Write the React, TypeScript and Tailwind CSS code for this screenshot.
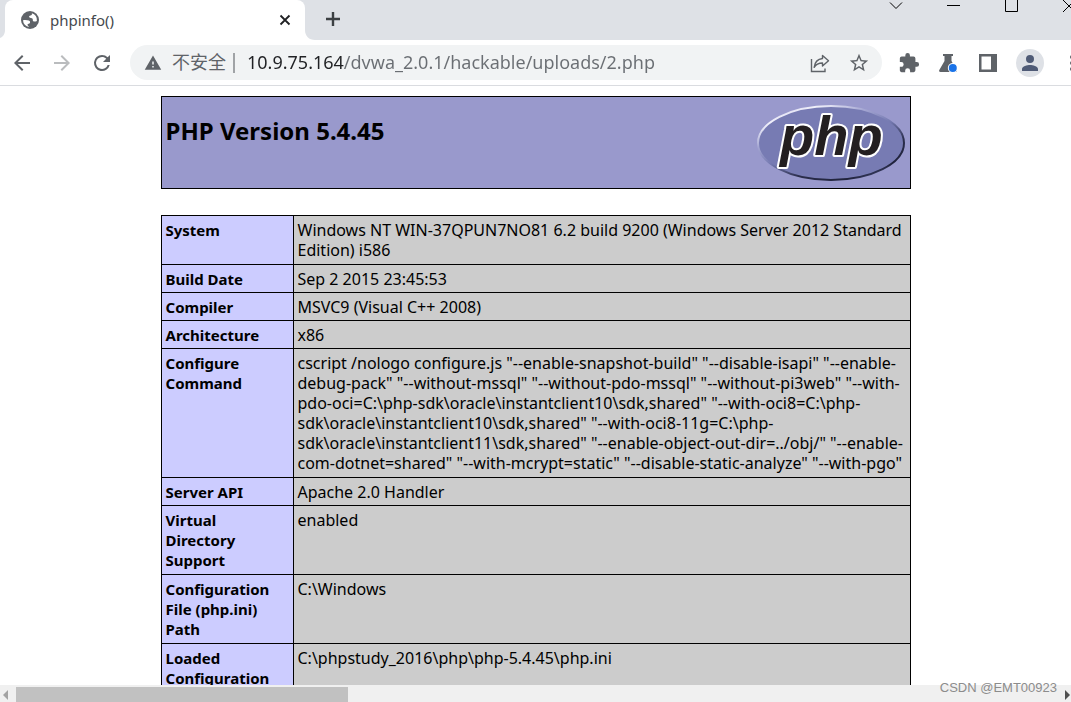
import React from "react";

type Row = { label: string[]; value: string[] };

const rows: Row[] = [
  {
    label: ["System"],
    value: [
      "Windows NT WIN-37QPUN7NO81 6.2 build 9200 (Windows Server 2012 Standard",
      "Edition) i586",
    ],
  },
  { label: ["Build Date"], value: ["Sep 2 2015 23:45:53"] },
  { label: ["Compiler"], value: ["MSVC9 (Visual C++ 2008)"] },
  { label: ["Architecture"], value: ["x86"] },
  {
    label: ["Configure", "Command"],
    value: [
      'cscript /nologo configure.js "--enable-snapshot-build" "--disable-isapi" "--enable-',
      'debug-pack" "--without-mssql" "--without-pdo-mssql" "--without-pi3web" "--with-',
      'pdo-oci=C:\\php-sdk\\oracle\\instantclient10\\sdk,shared" "--with-oci8=C:\\php-',
      'sdk\\oracle\\instantclient10\\sdk,shared" "--with-oci8-11g=C:\\php-',
      'sdk\\oracle\\instantclient11\\sdk,shared" "--enable-object-out-dir=../obj/" "--enable-',
      'com-dotnet=shared" "--with-mcrypt=static" "--disable-static-analyze" "--with-pgo"',
    ],
  },
  { label: ["Server API"], value: ["Apache 2.0 Handler"] },
  { label: ["Virtual", "Directory", "Support"], value: ["enabled"] },
  { label: ["Configuration", "File (php.ini)", "Path"], value: ["C:\\Windows"] },
  {
    label: ["Loaded", "Configuration"],
    value: ["C:\\phpstudy_2016\\php\\php-5.4.45\\php.ini"],
  },
];

function Icon({ d, className }: { d: string; className: string }) {
  return (
    <svg viewBox="0 0 24 24" className={className} fill="currentColor" aria-hidden="true">
      <path d={d} />
    </svg>
  );
}

function TabStrip() {
  return (
    <header className="flex h-10 shrink-0 bg-[#dee1e6]">
      <div className="flex w-[5px] shrink-0 items-end bg-[#dee1e6]">
        <svg viewBox="0 0 5 10" className="h-2.5 w-[5px]" aria-hidden="true">
          <path d="M5 0v10H0V8C3 7 5 4 5 0z" fill="#fff" />
        </svg>
      </div>
      <div className="flex w-[300px] shrink-0 items-center rounded-t-lg bg-white pr-2.5 pl-4">
        <svg viewBox="0 0 18 18" className="h-[18px] w-[18px]" aria-hidden="true">
          <circle cx="9" cy="9" r="9" fill="#5f6368" />
          <path
            d="M2 9.200c2.200-.4 4.500-.2 5.800.4 1.300.6 1.500 1.600 1.100 2.300-.5.800-1.900.6-2.300 1.400-.3.700.3 1.500 1.500 2.600A7 7 0 0 1 2 9.200z"
            fill="#fff"
          />
          <path
            d="M10.800 2.200c.5 1.300-.1 2-1.300 2.200-1.300.3-1.700 1-1.200 1.800.6.900 2.700.5 3.300 1.500.5.900-.2 1.800.7 2.500.9.700 2.200.3 3.600-.3A7 7 0 0 0 10.800 2.200z"
            fill="#fff"
          />
        </svg>
        <span className="ml-[11px] flex-1 text-[15px] leading-5 text-[#45494d]">phpinfo()</span>
        <button aria-label="Close tab" className="flex h-5 w-5 items-center justify-center text-[#202124]">
          <svg viewBox="0 0 12 12" className="h-3 w-3" aria-hidden="true">
            <path d="M1.500 1.500l9 9M10.500 1.500l-9 9" stroke="currentColor" strokeWidth="1.800" />
          </svg>
        </button>
      </div>
      <div className="flex w-2.5 shrink-0 items-end">
        <svg viewBox="0 0 10 10" className="h-2.5 w-2.5" aria-hidden="true">
          <path d="M0 0v10h10C4 10 0 6 0 0z" fill="#fff" />
        </svg>
      </div>
      <button aria-label="New tab" className="flex w-9 items-center justify-center pb-[3px] text-[#3c4043]">
        <svg viewBox="0 0 16 16" className="h-4 w-4" aria-hidden="true">
          <path d="M8 1v14M1 8h14" stroke="currentColor" strokeWidth="2.400" />
        </svg>
      </button>
      <div className="flex flex-1 justify-end overflow-hidden text-black">
        <div className="-mr-1.5 flex h-3 items-center gap-11">
          <button aria-label="Search tabs">
            <svg viewBox="0 0 14 12" className="h-3 w-3.5" fill="none" aria-hidden="true">
              <path d="M1 2.500l6 6 6-6" stroke="currentColor" />
            </svg>
          </button>
          <button aria-label="Minimize">
            <svg viewBox="0 0 14 12" className="h-3 w-3.5" fill="none" aria-hidden="true">
              <path d="M0 5.500h13" stroke="currentColor" />
            </svg>
          </button>
          <button aria-label="Maximize">
            <svg viewBox="0 0 14 12" className="h-3 w-3.5" fill="none" aria-hidden="true">
              <path d="M.5-1v12.500h12V-1" stroke="currentColor" />
            </svg>
          </button>
          <button aria-label="Close window">
            <svg viewBox="0 0 14 12" className="h-3 w-3.5" fill="none" aria-hidden="true">
              <path d="M0 0l12 12M12 0L0 12" stroke="currentColor" />
            </svg>
          </button>
        </div>
      </div>
    </header>
  );
}

function Toolbar() {
  return (
    <nav className="flex h-[46px] shrink-0 items-center overflow-hidden border-b border-[#dadce0] bg-white pl-2.5 text-[#5f6368]">
      <button aria-label="Back" className="mr-4 shrink-0">
        <Icon className="h-6 w-6" d="M20 11H7.830l5.590-5.590L12 4l-8 8 8 8 1.410-1.410L7.830 13H20v-2z" />
      </button>
      <button aria-label="Forward" className="mr-4 shrink-0 text-[#babcbe]">
        <Icon className="h-6 w-6" d="M4 13h12.170l-5.590 5.590L12 20l8-8-8-8-1.410 1.410L16.170 11H4v2z" />
      </button>
      <button aria-label="Reload" className="mr-4 shrink-0">
        <Icon
          className="h-6 w-6"
          d="M17.650 6.350A7.960 7.960 0 0 0 12 4a8 8 0 1 0 7.730 10h-2.080A6 6 0 1 1 12 6c1.660 0 3.140.69 4.220 1.780L13 11h7V4l-2.350 2.350z"
        />
      </button>
      <div className="flex h-[35px] flex-1 items-center rounded-full bg-[#f1f3f4] pr-3 pl-3.5">
        <Icon className="h-[18px] w-[18px] shrink-0" d="M1 21h22L12 2 1 21zm12-3h-2v-2h2v2zm0-4h-2v-4h2v4z" />
        <label htmlFor="address" className="ml-2.5 shrink-0 pb-0.5 text-[18px] leading-6">
          不安全
        </label>
        <span className="ml-[7px] h-5 w-0.5 shrink-0 bg-[#a0a3a6]" />
        <input
          id="address"
          type="text"
          defaultValue="10.9.75.164/dvwa_2.0.1/hackable/uploads/2.php"
          className="ml-3 min-w-0 flex-1 bg-linear-to-r from-[#202124] from-[97px] to-[#6a6e73] to-[97px] bg-clip-text pb-0.5 text-[18px] leading-6 text-transparent outline-none"
        />
        <button aria-label="Share" className="mr-4 shrink-0">
          <svg viewBox="0 0 24 24" className="h-6 w-6" fill="none" stroke="currentColor" strokeWidth="1.400" aria-hidden="true">
            <path d="M3.500 8v12.500h13.500V17.500" />
            <path d="M14.500 4.500l6 5.300-6 5.300v-3.100c-4 0-6.500 1.200-8.300 4.300.5-4.500 3.300-8.300 8.300-8.800v-3z" strokeLinejoin="round" />
          </svg>
        </button>
        <button aria-label="Bookmark" className="shrink-0">
          <Icon
            className="h-[22px] w-[22px]"
            d="M22 9.240l-7.190-.62L12 2 9.190 8.630 2 9.240l5.460 4.730L5.820 21 12 17.270 18.180 21l-1.630-7.030L22 9.240zM12 15.400l-3.760 2.270 1-4.280-3.320-2.880 4.380-.38L12 6.100l1.710 4.040 4.380.38-3.320 2.880 1 4.280L12 15.400z"
          />
        </button>
      </div>
      <div className="-mr-[13px] ml-4 flex shrink-0 items-center gap-4">
        <button aria-label="Extensions">
          <Icon
            className="h-[22px] w-[22px]"
            d="M20.500 11H19V7a2 2 0 0 0-2-2h-4V3.500a2.500 2.500 0 0 0-5 0V5H4a2 2 0 0 0-2 2v3.800h1.500a2.700 2.700 0 0 1 0 5.400H2V20c0 1.100.9 2 2 2h3.800v-1.500a2.700 2.700 0 0 1 5.400 0V22H17a2 2 0 0 0 2-2v-4h1.500a2.500 2.500 0 0 0 0-5z"
          />
        </button>
        <button aria-label="Experiments">
          <svg viewBox="0 0 24 24" className="h-6 w-6" aria-hidden="true">
            <path d="M7 3h10v2h-1.500v5l5 9c.7 1.300 0 2-1 2h-15c-1.200 0-1.800-.9-1.200-2l5.200-9V5H7z" fill="currentColor" />
            <circle cx="16.800" cy="17" r="5" fill="#fff" />
            <circle cx="16.800" cy="17" r="4" fill="#1a73e8" />
          </svg>
        </button>
        <button aria-label="Side panel">
          <svg viewBox="0 0 18 18" className="mx-[3px] h-[18px] w-[18px]" aria-hidden="true">
            <path d="M0 0h18v18H0zM2.500 2.500v13H12v-13z" fill="currentColor" fillRule="evenodd" />
          </svg>
        </button>
        <button aria-label="Profile" className="flex h-7 w-7 items-center justify-center rounded-full bg-[#dee1e6] text-[#4f5b76]">
          <Icon
            className="h-6 w-6"
            d="M12 12a4 4 0 1 0 0-8 4 4 0 0 0 0 8zm0 2c-2.670 0-8 1.340-8 4v2h16v-2c0-2.660-5.330-4-8-4z"
          />
        </button>
        <button aria-label="Menu">
          <Icon
            className="h-6 w-6"
            d="M12 8a2 2 0 1 0 0-4 2 2 0 0 0 0 4zm0 2a2 2 0 1 0 0 4 2 2 0 0 0 0-4zm0 6a2 2 0 1 0 0 4 2 2 0 0 0 0-4z"
          />
        </button>
      </div>
    </nav>
  );
}

function PhpLogo() {
  return (
    <svg viewBox="0 0 150 80" className="h-20 w-[150px] shrink-0" role="img" aria-label="PHP logo">
      <defs>
        <linearGradient id="rim" x1="0.150" y1="0" x2="0.850" y2="1">
          <stop offset="0" stopColor="#c9c9e8" />
          <stop offset="0.120" stopColor="#f0f0fa" />
          <stop offset="0.300" stopColor="#a5a7d3" />
          <stop offset="0.500" stopColor="#7479b0" />
          <stop offset="0.700" stopColor="#2b2e4c" />
          <stop offset="0.880" stopColor="#20233c" />
          <stop offset="1" stopColor="#5d629a" />
        </linearGradient>
      </defs>
      <ellipse cx="75" cy="40" rx="73" ry="37" fill="#777bb3" stroke="url(#rim)" strokeWidth="2" />
      <g
        fontFamily="Liberation Sans, Arial, sans-serif"
        fontSize="56"
        fontWeight="700"
        fontStyle="italic"
        strokeLinejoin="round"
      >
        <text x="24" y="52" fill="#231f20" stroke="#fff" strokeWidth="4" paintOrder="stroke">
          php
        </text>
      </g>
    </svg>
  );
}

function Lines({ lines }: { lines: string[] }) {
  return (
    <>
      {lines.map((line) => (
        <span key={line} className="block whitespace-nowrap">
          {line}
        </span>
      ))}
    </>
  );
}

function InfoTable() {
  return (
    <table className="mx-auto mt-[26px] w-[750px] table-fixed border-collapse leading-5">
      <colgroup>
        <col className="w-[132px]" />
        <col />
      </colgroup>
      <tbody>
        {rows.map((row) => {
          const tall = row.label.length > 1 || row.value.length > 1;
          const pad = tall ? "px-1 pt-1 pb-1" : "px-1 pt-1 pb-[3px]";
          return (
            <tr key={row.label[0] + row.value[0]}>
              <th
                scope="row"
                className={"border border-black bg-[#ccccff] text-left align-top text-[15px] leading-5 font-bold " + pad}
              >
                <Lines lines={row.label} />
              </th>
              <td className={"border border-black bg-[#cccccc] align-top text-[16px] leading-5 " + pad}>
                <Lines lines={row.value} />
              </td>
            </tr>
          );
        })}
      </tbody>
    </table>
  );
}

function ScrollBar() {
  return (
    <div className="flex h-[17px] shrink-0 bg-[#f0f0f0] pt-0.5">
      <button aria-label="Scroll left" className="flex w-4 items-center pl-[3px] text-[#a3a3a3]">
        <svg viewBox="0 0 5 10" className="h-2.5 w-[5px]" fill="currentColor" aria-hidden="true">
          <path d="M5 0v10L0 5z" />
        </svg>
      </button>
      <div className="flex-1">
        <div className="h-full w-[31.8%] bg-[#c1c1c1]" />
      </div>
      <button aria-label="Scroll right" className="flex w-2.5 items-center pl-1 text-[#505050]">
        <svg viewBox="0 0 5 10" className="h-2.5 w-[5px]" fill="currentColor" aria-hidden="true">
          <path d="M0 0v10l5-5z" />
        </svg>
      </button>
    </div>
  );
}

export default function App() {
  return (
    <div className="relative flex h-screen flex-col overflow-hidden bg-white font-['Noto_Sans','Noto_Sans_CJK_SC',sans-serif] text-black">
      <TabStrip />
      <Toolbar />
      <main className="min-h-0 flex-1 overflow-hidden pt-2.5">
        <div className="mx-auto flex h-[93px] w-[750px] justify-between border border-black bg-[#9999cc] py-1.5 pr-1 pl-1">
          <h1 className="pt-3 text-[24px] leading-8 font-bold">PHP Version 5.4.45</h1>
          <PhpLogo />
        </div>
        <InfoTable />
      </main>
      <ScrollBar />
      <span className="absolute right-3.5 bottom-1.5 font-['Liberation_Sans',Arial,sans-serif] text-[13px] leading-4 text-[#8c8c8c]">
        CSDN @EMT00923
      </span>
    </div>
  );
}
